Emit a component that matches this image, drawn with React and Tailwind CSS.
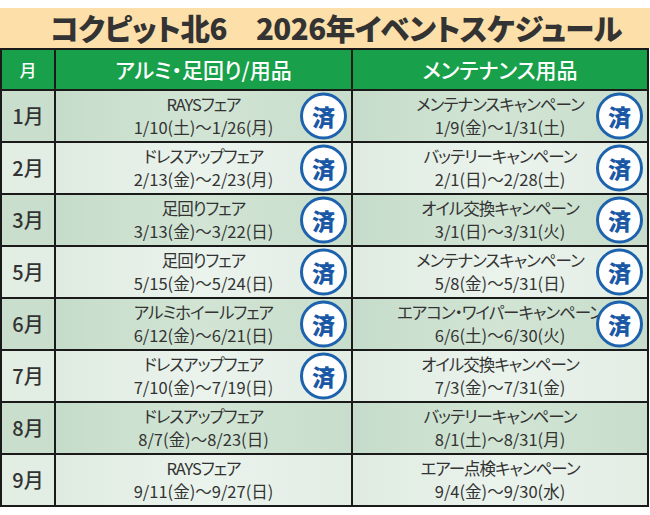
import React from "react";

const rows = [
  { m: "1月", a: "RAYSフェア", ad: "1/10(土)〜1/26(月)", ab: true, b: "メンテナンスキャンペーン", bd: "1/9(金)〜1/31(土)", bb: true },
  { m: "2月", a: "ドレスアップフェア", ad: "2/13(金)〜2/23(月)", ab: true, b: "バッテリーキャンペーン", bd: "2/1(日)〜2/28(土)", bb: true },
  { m: "3月", a: "足回りフェア", ad: "3/13(金)〜3/22(日)", ab: true, b: "オイル交換キャンペーン", bd: "3/1(日)〜3/31(火)", bb: true },
  { m: "5月", a: "足回りフェア", ad: "5/15(金)〜5/24(日)", ab: true, b: "メンテナンスキャンペーン", bd: "5/8(金)〜5/31(日)", bb: true },
  { m: "6月", a: "アルミホイールフェア", ad: "6/12(金)〜6/21(日)", ab: true, b: "エアコン・ワイパーキャンペーン", bd: "6/6(土)〜6/30(火)", bb: true },
  { m: "7月", a: "ドレスアップフェア", ad: "7/10(金)〜7/19(日)", ab: true, b: "オイル交換キャンペーン", bd: "7/3(金)〜7/31(金)", bb: false },
  { m: "8月", a: "ドレスアップフェア", ad: "8/7(金)〜8/23(日)", ab: false, b: "バッテリーキャンペーン", bd: "8/1(土)〜8/31(月)", bb: false },
  { m: "9月", a: "RAYSフェア", ad: "9/11(金)〜9/27(日)", ab: false, b: "エアー点検キャンペーン", bd: "9/4(金)〜9/30(水)", bb: false },
];

const font = { fontFamily: '"Noto Sans CJK JP", "Noto Sans", sans-serif' };

function Badge() {
  return (
    <div className="absolute right-[4px] top-1/2 -translate-y-1/2 w-[47px] h-[47px] rounded-full border-[3px] border-[#1d62ad] bg-white flex items-center justify-center z-10">
      <span className="text-[23px] font-black text-[#1a58a6] leading-none">済</span>
    </div>
  );
}

function Cell({ title, date, badge, dark }) {
  return (
    <div
      className={
        "relative flex flex-col items-center justify-center text-[#333] text-[16.5px] leading-[23px] whitespace-nowrap " +
        (dark
          ? "bg-gradient-to-r from-[#c6dcca] via-[#d2e5d5] to-[#c8ddcb]"
          : "bg-gradient-to-r from-[#dfebe1] via-[#eaf3ec] to-[#e2ede4]")
      }
    >
      <div className="relative z-0 tracking-[-1px]">{title}</div>
      <div className="relative z-0">{date}</div>
      {badge && <Badge />}
    </div>
  );
}

export default function App() {
  return (
    <div className="w-[650px] h-[515px] bg-white overflow-hidden [font-feature-settings:'palt']" style={font}>
      <div className="mt-[8px] h-[40px] bg-[#fcdfa9] flex items-center justify-center pl-[22px]">
        <span className="text-[29.5px] font-black text-[#333] tracking-[-0.5px] leading-none">
          コクピット北6　2026年イベントスケジュール
        </span>
      </div>
      <div className="w-[649px] border-2 border-[#1a1a1a] bg-[#1a1a1a] grid grid-cols-[52px_295px_1fr] grid-rows-[39px_repeat(8,50px)] gap-[2px]">
        <div className="bg-[#18a04a] flex items-center justify-center text-white text-[17px] font-medium">月</div>
        <div className="bg-[#18a04a] flex items-center justify-center text-white text-[21px] font-medium">アルミ・足回り/用品</div>
        <div className="bg-[#18a04a] flex items-center justify-center text-white text-[21px] font-medium">メンテナンス用品</div>
        {rows.map((r, i) => {
          const dark = i % 2 === 0;
          return (
            <React.Fragment key={r.m}>
              <div
                className={
                  "flex items-center justify-center text-[#333] text-[20px] font-medium " +
                  (dark ? "bg-[#c9decc]" : "bg-[#e2ede4]")
                }
              >
                {r.m}
              </div>
              <Cell title={r.a} date={r.ad} badge={r.ab} dark={dark} />
              <Cell title={r.b} date={r.bd} badge={r.bb} dark={dark} />
            </React.Fragment>
          );
        })}
      </div>
    </div>
  );
}
